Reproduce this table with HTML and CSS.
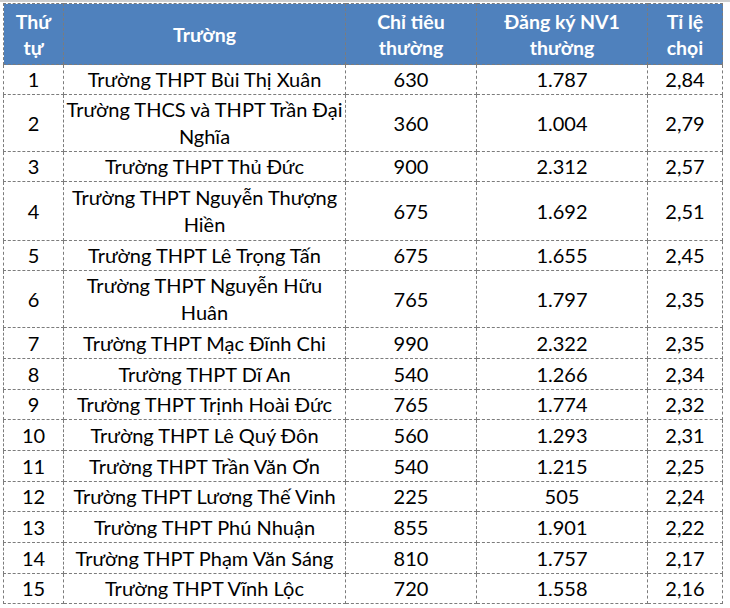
FILE: index.html
```html
<!DOCTYPE html>
<html lang="vi">
<head>
<meta charset="utf-8">
<title>Tỉ lệ chọi</title>
<link rel="stylesheet" href="styles.css">
</head>
<body>
<div class="topband"></div>
<table class="grid">
  <colgroup>
    <col class="c-stt"><col class="c-name"><col class="c-quota"><col class="c-reg"><col class="c-ratio">
  </colgroup>
  <thead>
    <tr class="head">
      <th>Thứ<br>tự</th>
      <th>Trường</th>
      <th>Chỉ tiêu<br>thường</th>
      <th>Đăng ký NV1<br>thường</th>
      <th>Tỉ lệ<br>chọi</th>
    </tr>
  </thead>
  <tbody>
    <tr class="r30"><td>1</td><td>Trường THPT Bùi Thị Xuân</td><td>630</td><td>1.787</td><td>2,84</td></tr>
    <tr class="r57"><td>2</td><td>Trường THCS và THPT Trần Đại<br>Nghĩa</td><td>360</td><td>1.004</td><td>2,79</td></tr>
    <tr class="r30"><td>3</td><td>Trường THPT Thủ Đức</td><td>900</td><td>2.312</td><td>2,57</td></tr>
    <tr class="r59"><td>4</td><td>Trường THPT Nguyễn Thượng<br>Hiền</td><td>675</td><td>1.692</td><td>2,51</td></tr>
    <tr class="r30"><td>5</td><td>Trường THPT Lê Trọng Tấn</td><td>675</td><td>1.655</td><td>2,45</td></tr>
    <tr class="r57"><td>6</td><td>Trường THPT Nguyễn Hữu<br>Huân</td><td>765</td><td>1.797</td><td>2,35</td></tr>
    <tr class="r31"><td>7</td><td>Trường THPT Mạc Đĩnh Chi</td><td>990</td><td>2.322</td><td>2,35</td></tr>
    <tr class="r31"><td>8</td><td>Trường THPT Dĩ An</td><td>540</td><td>1.266</td><td>2,34</td></tr>
    <tr class="r30"><td>9</td><td>Trường THPT Trịnh Hoài Đức</td><td>765</td><td>1.774</td><td>2,32</td></tr>
    <tr class="r31"><td>10</td><td>Trường THPT Lê Quý Đôn</td><td>560</td><td>1.293</td><td>2,31</td></tr>
    <tr class="r31"><td>11</td><td>Trường THPT Trần Văn Ơn</td><td>540</td><td>1.215</td><td>2,25</td></tr>
    <tr class="r30"><td>12</td><td>Trường THPT Lương Thế Vinh</td><td>225</td><td>505</td><td>2,24</td></tr>
    <tr class="r31"><td>13</td><td>Trường THPT Phú Nhuận</td><td>855</td><td>1.901</td><td>2,22</td></tr>
    <tr class="r31"><td>14</td><td>Trường THPT Phạm Văn Sáng</td><td>810</td><td>1.757</td><td>2,17</td></tr>
    <tr class="r30"><td>15</td><td>Trường THPT Vĩnh Lộc</td><td>720</td><td>1.558</td><td>2,16</td></tr>
  </tbody>
</table>
</body>
</html>
```

FILE: styles.css
```css
html, body {
  margin: 0;
  padding: 0;
  background: #ffffff;
}
body {
  font-family: Lato, "Open Sans", "Liberation Sans", sans-serif;
  color: #000000;
}
.topband {
  height: 2px;
  background: #cfcfcf;
  margin-bottom: 1px;
}
.grid {
  margin-left: 3px;
  border-collapse: collapse;
  table-layout: fixed;
  width: 719px;
}
.c-stt { width: 60px; }
.c-name { width: 282px; }
.c-quota { width: 131px; }
.c-reg { width: 171px; }
.c-ratio { width: 75px; }
.grid th,
.grid td {
  border: 1px dashed #7c7c7c;
  padding: 0;
  text-align: center;
  vertical-align: middle;
}
.grid th {
  background: #4f81bd;
  color: #ffffff;
  font-weight: 700;
  font-size: 19.5px;
  line-height: 26px;
  padding-top: 2px;
}
.grid td {
  font-size: 20px;
  line-height: 27px;
}
.head { height: 61px; }
.r30 { height: 30px; }
.r31 { height: 31px; }
.r57 { height: 57px; }
.r59 { height: 59px; }
```
